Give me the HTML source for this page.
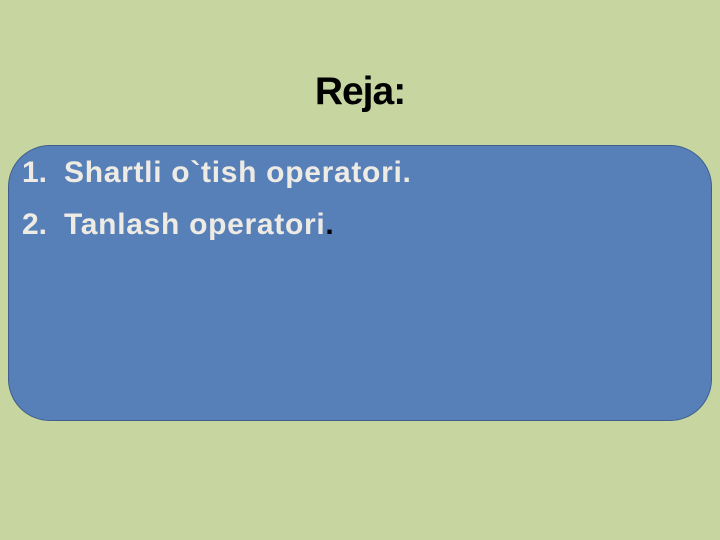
<!DOCTYPE html>
<html><head><style>
body{margin:0;width:720px;height:540px;background:#c7d6a1;position:relative;overflow:hidden;font-family:"Liberation Sans",sans-serif}
.t{position:absolute;left:0;width:720px;top:70px;text-align:center;font-weight:bold;font-size:39px;color:#000;letter-spacing:-1px}
.box{position:absolute;left:8px;top:145px;width:702px;height:274px;background:#5880b8;border:1.5px solid #3e5f8e;border-radius:42px}
.l{position:absolute;font-weight:bold;font-size:30px;color:#eeebe4;white-space:nowrap;letter-spacing:0.7px}
.n{position:absolute;left:22px;letter-spacing:0}
</style></head><body>
<div class="t">Reja:</div>
<div class="box"></div>
<div class="l n" style="top:156px">1.</div>
<div class="l" style="left:64px;top:156px">Shartli o`tish operatori.</div>
<div class="l n" style="top:208px">2.</div>
<div class="l" style="left:64px;top:208px">Tanlash operatori<span style="color:#000">.</span></div>
</body></html>
